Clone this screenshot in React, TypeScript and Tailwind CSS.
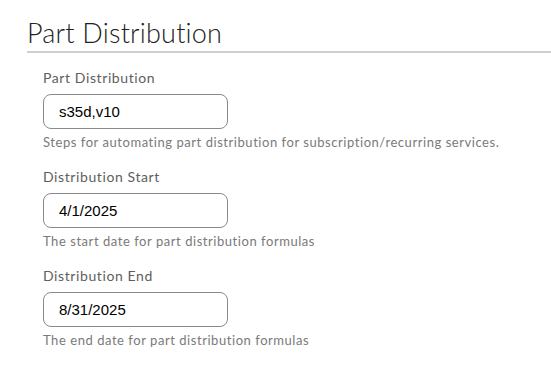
import React from "react";

const fields = [
  {
    label: "Part Distribution",
    value: "s35d,v10",
    help: "Steps for automating part distribution for subscription/recurring services.",
  },
  {
    label: "Distribution Start",
    value: "4/1/2025",
    help: "The start date for part distribution formulas",
  },
  {
    label: "Distribution End",
    value: "8/31/2025",
    help: "The end date for part distribution formulas",
  },
];

export default function App() {
  return (
    <div className="min-h-[368px] bg-white pl-[27px] pt-[17px] font-['Lato',sans-serif]">
      {/* Section header */}
      <h1 className="text-[27px] leading-[32px] text-[#222] font-light tracking-[0.2px]">Part Distribution</h1>
      <div className="mt-[2px] h-[2px] bg-[#cfcfcf]" />

      <div className="pl-[16px] pt-[16px]">
        {fields.map((f) => (
          <div key={f.label} className="mb-[18px]">
            <label className="block text-[14px] leading-[18px] text-[#5e5e5e] tracking-[0.6px]">{f.label}</label>
            <input
              type="text"
              defaultValue={f.value}
              className="mt-[7px] block w-[185px] h-[35px] rounded-[8px] border border-[#8a8a8a] bg-white px-[15px] text-[15px] text-black font-['Liberation_Sans',Arial,sans-serif] outline-none"
            />
            <p className="mt-[5px] text-[13px] leading-[16px] text-[#7a7a7a] tracking-[0.55px]">{f.help}</p>
          </div>
        ))}
      </div>
    </div>
  );
}
